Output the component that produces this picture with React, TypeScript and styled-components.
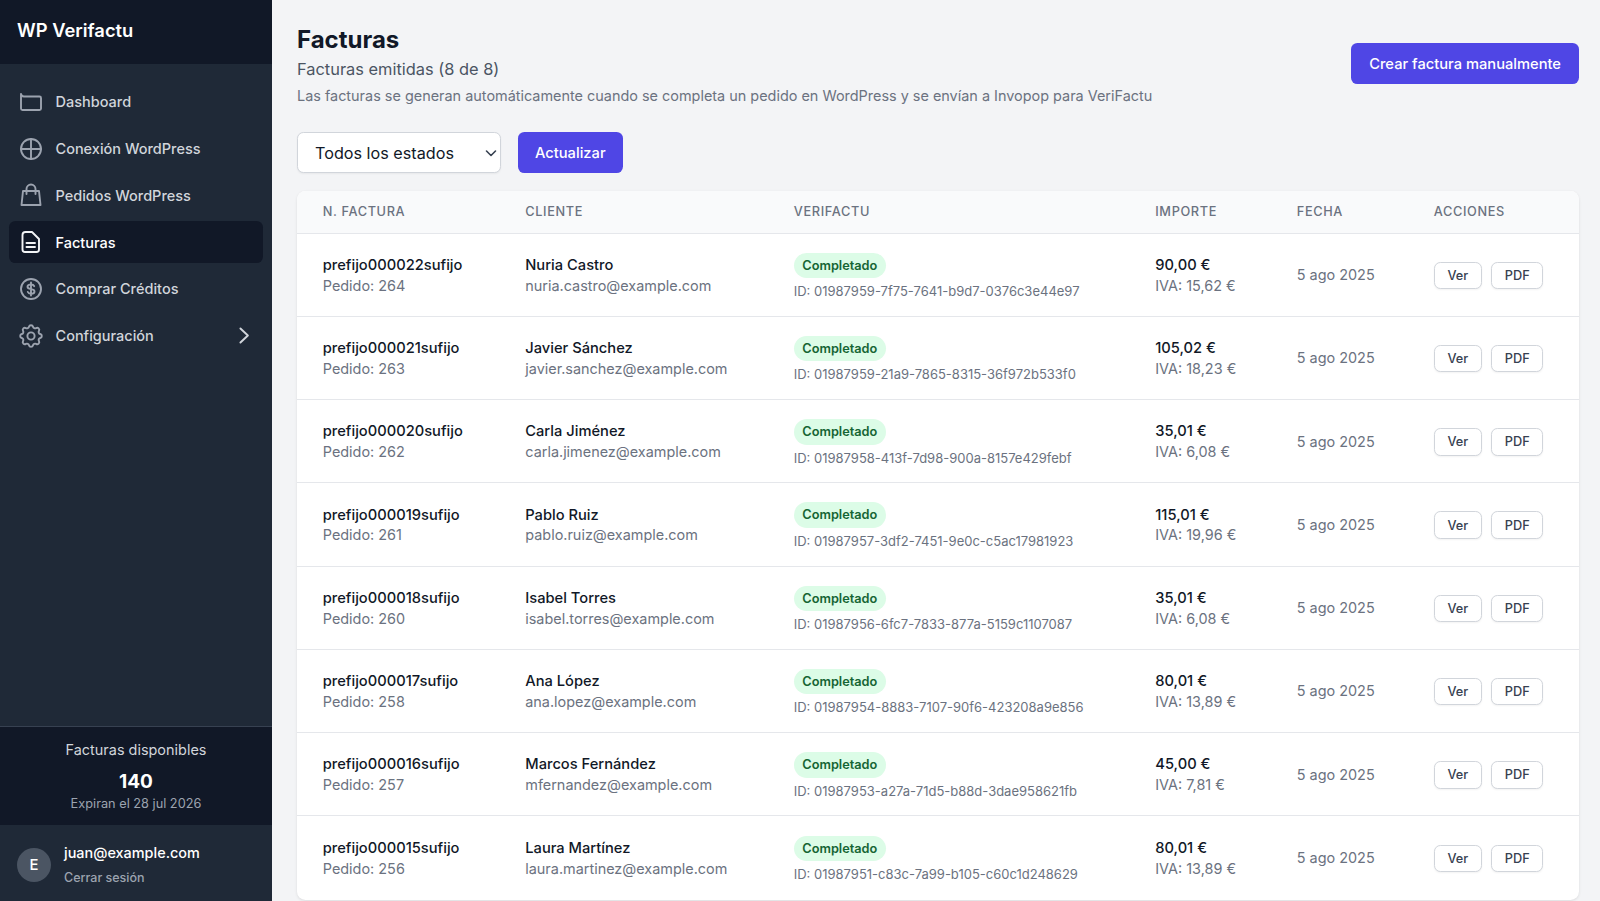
import styled, { createGlobalStyle } from "styled-components";

const Global = createGlobalStyle`
  html, body {
    margin: 0;
    height: 100%;
    overflow: hidden;
    background: #f3f4f6;
    font-family: Inter, "Liberation Sans", sans-serif;
  }
  * { box-sizing: border-box; }
`;

const Shell = styled.div`
  display: flex;
  height: 901px;
  overflow: hidden;
`;

const Sidebar = styled.aside`
  width: 272px;
  flex: none;
  display: flex;
  flex-direction: column;
  background: #1f2937;
`;

const Brand = styled.div`
  height: 64px;
  padding: 0 17px 4px;
  display: flex;
  align-items: center;
  background: #111827;
  color: #fff;
  font-size: 18.35px;
  font-weight: 600;
`;

const Nav = styled.nav`
  flex: 1;
  padding: 16.5px 9px;
  display: flex;
  flex-direction: column;
  gap: 4.25px;
`;

const NavItem = styled.a<{ $active?: boolean }>`
  height: 42.5px;
  padding: 0 10px;
  display: flex;
  align-items: center;
  gap: 12.5px;
  border-radius: 6.4px;
  font-size: 14.5px;
  font-weight: 500;
  color: ${({ $active }) => ($active ? "#fff" : "#d1d5db")};
  background: ${({ $active }) => ($active ? "#111827" : "transparent")};

  svg {
    width: 24px;
    height: 24px;
    flex: none;
    fill: none;
    stroke: ${({ $active }) => ($active ? "#f3f4f6" : "#9ca3af")};
    stroke-width: 1.9;
    stroke-linecap: round;
    stroke-linejoin: round;
  }
`;

const Chevron = styled.svg`
  margin-left: auto;
  margin-right: -1px;
  && {
    width: 21px;
    height: 21px;
    stroke: #d1d5db;
    stroke-width: 2.2;
  }
`;

const GearIcon = styled.svg`
  && {
    stroke-width: 1.6;
  }
`;

const Credits = styled.div`
  height: 99px;
  padding-top: 12px;
  border-top: 1px solid #374151;
  background: #111827;
  text-align: center;
`;

const CreditsLabel = styled.div`
  font-size: 14.45px;
  line-height: 21px;
  color: #d1d5db;
`;

const CreditsValue = styled.div`
  margin-top: 9px;
  font-size: 19px;
  line-height: 25px;
  font-weight: 700;
  color: #fff;
`;

const CreditsNote = styled.div`
  margin-top: 1px;
  font-size: 12.75px;
  line-height: 17px;
  color: #9ca3af;
`;

const User = styled.div`
  height: 76px;
  padding: 3px 17px 0;
  display: flex;
  align-items: center;
  gap: 13px;
`;

const Avatar = styled.div`
  width: 34px;
  height: 34px;
  border-radius: 50%;
  background: #4b5563;
  color: #fff;
  display: flex;
  align-items: center;
  justify-content: center;
  font-size: 14.875px;
  font-weight: 500;
`;

const UserInfo = styled.div`
  padding-bottom: 2px;
`;

const UserMail = styled.div`
  font-size: 14.45px;
  line-height: 21px;
  font-weight: 500;
  color: #fff;
`;

const UserLogout = styled.div`
  margin-top: 6px;
  font-size: 12.5px;
  line-height: 17px;
  font-weight: 500;
  color: #9ca3af;
`;

const Main = styled.main`
  flex: 1;
  min-width: 0;
  padding: 22.5px 21px 0 25px;
`;

const Head = styled.header`
  display: flex;
  align-items: center;
  justify-content: space-between;
`;

const Title = styled.h1`
  margin: 0;
  font-size: 24px;
  line-height: 34px;
  font-weight: 700;
  color: #111827;
`;

const Subtitle = styled.p`
  margin: 0;
  font-size: 16.4px;
  line-height: 25.5px;
  color: #4b5563;
`;

const Hint = styled.p`
  margin: 3px 0 0;
  font-size: 14.43px;
  line-height: 21.25px;
  color: #6b7280;
`;

const Button = styled.button`
  border: 0;
  border-radius: 6.4px;
  padding: 1px 17px 0;
  height: 41px;
  background: #4f46e5;
  color: #fff;
  font: 500 14.7px Inter, sans-serif;
`;

const CreateButton = styled(Button)`
  margin-bottom: 2px;
  padding: 1px 18px 0;
`;

const Filters = styled.div`
  margin: 25.25px 0 18px;
  display: flex;
  gap: 17px;
`;

const SelectBox = styled.div`
  position: relative;
  width: 204px;

  svg {
    position: absolute;
    right: 4.5px;
    top: 15px;
    width: 12px;
    height: 12px;
    fill: none;
    stroke: #374151;
    stroke-width: 1.6;
    stroke-linecap: round;
    stroke-linejoin: round;
    pointer-events: none;
  }
`;

const Select = styled.select`
  appearance: none;
  width: 100%;
  height: 41px;
  padding: 1px 0 0 17px;
  border: 1px solid #d1d5db;
  border-radius: 6.4px;
  background: #fff;
  box-shadow: 0 1px 2px rgba(0, 0, 0, 0.05);
  color: #111827;
  font: 400 16.2px Inter, sans-serif;
`;

const Card = styled.section`
  background: #fff;
  border-radius: 8.5px;
  box-shadow: 0 1px 3px rgba(0, 0, 0, 0.1);
  overflow: hidden;
`;

const columns = "202.5px 268.5px 361.5px 141.5px 137px 1fr";

const HeadRow = styled.div`
  display: grid;
  grid-template-columns: ${columns};
  align-items: center;
  height: 43px;
  padding-left: 25.75px;
  background: #f9fafb;
  border-bottom: 1px solid #e5e7eb;
  font-size: 12.75px;
  font-weight: 500;
  letter-spacing: 0.05em;
  color: #6b7280;
  text-transform: uppercase;
`;

const Row = styled.div`
  display: grid;
  grid-template-columns: ${columns};
  align-items: center;
  height: 83.25px;
  padding: 2px 0 0 25.75px;
  border-bottom: 1px solid #e5e7eb;
  &:last-child { border-bottom: 0; }
`;

const Strong = styled.div`
  font-size: 14.7px;
  line-height: 20.75px;
  font-weight: 470;
  color: #111827;
`;

const Muted = styled.div`
  font-size: 14.43px;
  line-height: 20.75px;
  color: #6b7280;
`;

const DateCell = styled(Muted)`
  margin-bottom: 0.5px;
`;

const StatusCell = styled.div`
  padding-top: 1.5px;
`;

const Badge = styled.span`
  display: inline-block;
  height: 25.5px;
  padding: 0 8.5px;
  border-radius: 13px;
  background: #dcfce7;
  color: #166534;
  font-size: 12.75px;
  line-height: 25.5px;
  font-weight: 600;
`;

const InvoiceId = styled.div`
  margin-top: 5px;
  font-size: 13px;
  line-height: 17px;
  color: #6b7280;
`;

const Actions = styled.div`
  display: flex;
  gap: 9px;
  margin-bottom: 0.5px;
`;

const Small = styled.button`
  height: 27.5px;
  padding: 0 12.75px;
  border: 1px solid #d1d5db;
  border-radius: 6.4px;
  background: #fff;
  box-shadow: 0 1px 2px rgba(0, 0, 0, 0.05);
  color: #374151;
  font: 500 12.75px Inter, sans-serif;
`;

const invoices = [
  ["prefijo000022sufijo", "264", "Nuria Castro", "nuria.castro@example.com", "01987959-7f75-7641-b9d7-0376c3e44e97", "90,00 €", "15,62 €"],
  ["prefijo000021sufijo", "263", "Javier Sánchez", "javier.sanchez@example.com", "01987959-21a9-7865-8315-36f972b533f0", "105,02 €", "18,23 €"],
  ["prefijo000020sufijo", "262", "Carla Jiménez", "carla.jimenez@example.com", "01987958-413f-7d98-900a-8157e429febf", "35,01 €", "6,08 €"],
  ["prefijo000019sufijo", "261", "Pablo Ruiz", "pablo.ruiz@example.com", "01987957-3df2-7451-9e0c-c5ac17981923", "115,01 €", "19,96 €"],
  ["prefijo000018sufijo", "260", "Isabel Torres", "isabel.torres@example.com", "01987956-6fc7-7833-877a-5159c1107087", "35,01 €", "6,08 €"],
  ["prefijo000017sufijo", "258", "Ana López", "ana.lopez@example.com", "01987954-8883-7107-90f6-423208a9e856", "80,01 €", "13,89 €"],
  ["prefijo000016sufijo", "257", "Marcos Fernández", "mfernandez@example.com", "01987953-a27a-71d5-b88d-3dae958621fb", "45,00 €", "7,81 €"],
  ["prefijo000015sufijo", "256", "Laura Martínez", "laura.martinez@example.com", "01987951-c83c-7a99-b105-c60c1d248629", "80,01 €", "13,89 €"],
];

export default function App() {
  return (
    <Shell>
      <Global />
      <Sidebar>
        <Brand>WP Verifactu</Brand>
        <Nav>
          <NavItem>
            <svg viewBox="0 0 24 24"><path d="M2 4v14.500A1.500 1.500 0 0 0 3.500 20h17a1.500 1.500 0 0 0 1.500-1.500V8a1.500 1.500 0 0 0-1.500-1.500H5A3 3 0 0 1 2 4z" /></svg>
            Dashboard
          </NavItem>
          <NavItem>
            <svg viewBox="0 0 24 24"><circle cx="12" cy="12" r="10" /><path d="M2 12h20M12 2v20" /></svg>
            Conexión WordPress
          </NavItem>
          <NavItem>
            <svg viewBox="0 0 24 24"><path d="M4 8h16l1.500 14h-19zM7.500 11V6a4.500 4.500 0 0 1 9 0v5" /></svg>
            Pedidos WordPress
          </NavItem>
          <NavItem $active>
            <svg viewBox="0 0 24 24"><path d="M6.500 2H13l7 7v10.500a2.500 2.500 0 0 1-2.500 2.500H6a2.500 2.500 0 0 1-2.500-2.500V5a3 3 0 0 1 3-3zM7.500 13h8.500M7.500 17h8.500" /></svg>
            Facturas
          </NavItem>
          <NavItem>
            <svg viewBox="0 0 24 24"><circle cx="12" cy="12" r="10" /><path d="M15.200 9.200C14.700 8 13.500 7.500 12 7.500c-2 0-3.500 1-3.500 2.300s1.300 2 3.500 2.300 3.500 1 3.500 2.300-1.500 2.300-3.500 2.300c-1.500 0-2.700-.5-3.200-1.700M12 5.500v13" /></svg>
            Comprar Créditos
          </NavItem>
          <NavItem>
            <GearIcon viewBox="2 2 20 20"><path d="M10.325 4.317c.426-1.756 2.924-1.756 3.350 0a1.724 1.724 0 0 0 2.573 1.066c1.543-.94 3.310.826 2.370 2.370a1.724 1.724 0 0 0 1.065 2.572c1.756.426 1.756 2.924 0 3.350a1.724 1.724 0 0 0-1.066 2.573c.94 1.543-.826 3.310-2.370 2.370a1.724 1.724 0 0 0-2.572 1.065c-.426 1.756-2.924 1.756-3.350 0a1.724 1.724 0 0 0-2.573-1.066c-1.543.94-3.310-.826-2.370-2.370a1.724 1.724 0 0 0-1.065-2.572c-1.756-.426-1.756-2.924 0-3.350a1.724 1.724 0 0 0 1.066-2.573c-.94-1.543.826-3.310 2.370-2.370.996.608 2.296.07 2.572-1.065z" /><circle cx="12" cy="12" r="3" /></GearIcon>
            Configuración
            <Chevron viewBox="0 0 24 24"><path d="M8.500 4l8.500 8-8.500 8" /></Chevron>
          </NavItem>
        </Nav>
        <Credits>
          <CreditsLabel>Facturas disponibles</CreditsLabel>
          <CreditsValue>140</CreditsValue>
          <CreditsNote>Expiran el 28 jul 2026</CreditsNote>
        </Credits>
        <User>
          <Avatar>E</Avatar>
          <UserInfo>
            <UserMail>juan@example.com</UserMail>
            <UserLogout>Cerrar sesión</UserLogout>
          </UserInfo>
        </User>
      </Sidebar>
      <Main>
        <Head>
          <div>
            <Title>Facturas</Title>
            <Subtitle>Facturas emitidas (8 de 8)</Subtitle>
            <Hint>Las facturas se generan automáticamente cuando se completa un pedido en WordPress y se envían a Invopop para VeriFactu</Hint>
          </div>
          <CreateButton>Crear factura manualmente</CreateButton>
        </Head>
        <Filters>
          <SelectBox>
            <Select defaultValue="all">
              <option value="all">Todos los estados</option>
            </Select>
            <svg viewBox="0 0 12 12"><path d="M1.500 4L6 8.500 10.500 4" /></svg>
          </SelectBox>
          <Button>Actualizar</Button>
        </Filters>
        <Card>
          <HeadRow>
            <div>N. Factura</div>
            <div>Cliente</div>
            <div>VeriFactu</div>
            <div>Importe</div>
            <div>Fecha</div>
            <div>Acciones</div>
          </HeadRow>
          {invoices.map((inv) => (
            <Row key={inv[0]}>
              <div>
                <Strong>{inv[0]}</Strong>
                <Muted>Pedido: {inv[1]}</Muted>
              </div>
              <div>
                <Strong>{inv[2]}</Strong>
                <Muted>{inv[3]}</Muted>
              </div>
              <StatusCell>
                <Badge>Completado</Badge>
                <InvoiceId>ID: {inv[4]}</InvoiceId>
              </StatusCell>
              <div>
                <Strong>{inv[5]}</Strong>
                <Muted>IVA: {inv[6]}</Muted>
              </div>
              <DateCell>5 ago 2025</DateCell>
              <Actions>
                <Small>Ver</Small>
                <Small>PDF</Small>
              </Actions>
            </Row>
          ))}
        </Card>
      </Main>
    </Shell>
  );
}
